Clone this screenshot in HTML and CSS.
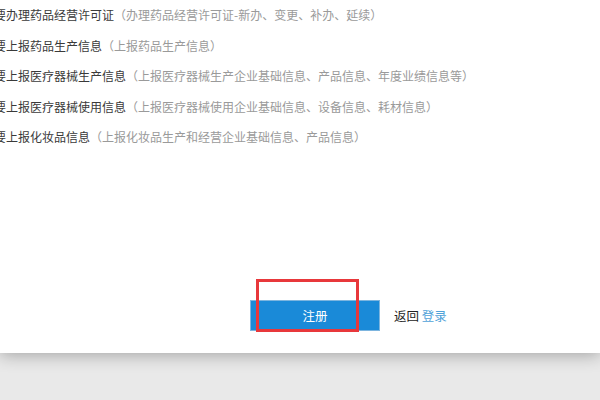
FILE: index.html
```html
<!DOCTYPE html>
<html lang="zh-CN">
<head>
    <meta charset="UTF-8">
    <title>注册</title>
    <link rel="stylesheet" href="styles.css">
</head>
<body>
    <div class="panel">
        <ul class="options">
            <li>要办理药品经营许可证<span class="note">（办理药品经营许可证-新办、变更、补办、延续）</span></li>
            <li>要上报药品生产信息<span class="note">（上报药品生产信息）</span></li>
            <li>要上报医疗器械生产信息<span class="note">（上报医疗器械生产企业基础信息、产品信息、年度业绩信息等）</span></li>
            <li>要上报医疗器械使用信息<span class="note">（上报医疗器械使用企业基础信息、设备信息、耗材信息）</span></li>
            <li>要上报化妆品信息<span class="note">（上报化妆品生产和经营企业基础信息、产品信息）</span></li>
        </ul>
        <div class="actions">
            <div class="btn-wrap">
                <button class="btn-submit">注册</button>
                <!-- annotation box -->
                <div class="mark"></div>
            </div>
            <span class="back">返回 <a href="#">登录</a></span>
        </div>
    </div>
</body>
</html>
```

FILE: styles.css
```css
html, body {
    margin: 0;
    padding: 0;
}
body {
    width: 600px;
    height: 400px;
    overflow: hidden;
    background-color: #e9e9e9;
    font-family: "Microsoft YaHei", "Noto Sans CJK SC", sans-serif;
    font-size: 12px;
    color: #3a3a3a;
}
.panel {
    height: 353px;
    background-color: #fff;
    box-shadow: 0 2px 16px rgba(0, 0, 0, 0.3);
    display: flex;
    flex-direction: column;
}
.options {
    list-style: none;
    margin: 0 0 0 -6px;
    padding: 0;
}
.options li {
    line-height: 30.6px;
    white-space: nowrap;
}
.note {
    color: #9a9a9a;
}
.actions {
    margin-top: auto;
    margin-bottom: 22px;
    margin-left: 250px;
    display: flex;
    align-items: center;
    gap: 14px;
}
.btn-wrap {
    position: relative;
}
.btn-submit {
    display: block;
    width: 130px;
    height: 31px;
    border: 1px solid #7db5df;
    background-color: #1a8ad8;
    color: #fff;
    font-family: inherit;
    font-size: 12.5px;
    padding: 0;
}
.mark {
    position: absolute;
    left: 6px;
    top: -21px;
    width: 97px;
    height: 47px;
    border: 3px solid #e8383b;
}
.back {
    font-size: 12.5px;
    color: #222;
}
.back a {
    color: #4fa2d8;
    text-decoration: none;
}
```
